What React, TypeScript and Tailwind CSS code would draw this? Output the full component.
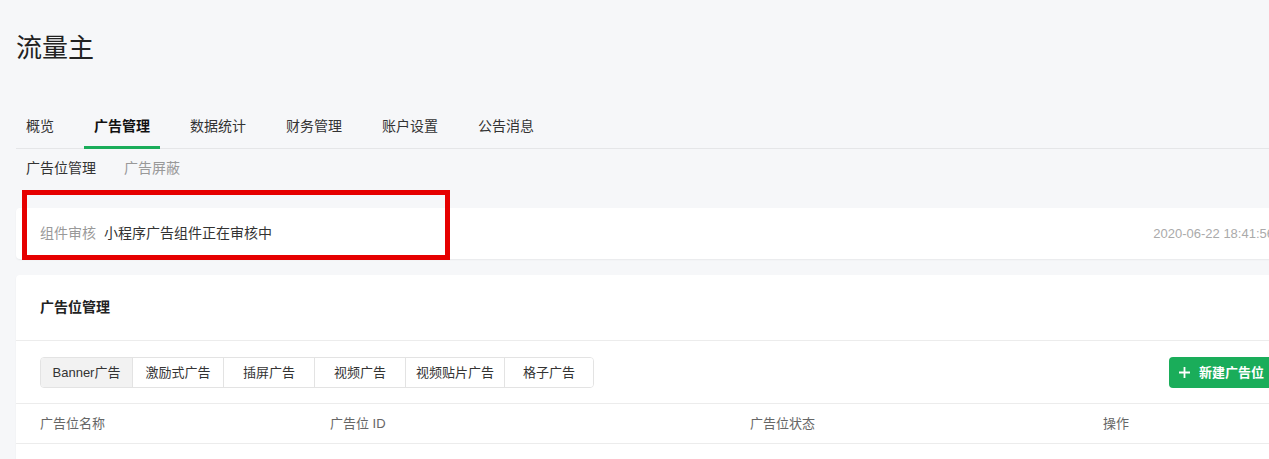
import React from "react";

const font = "font-['Liberation_Sans','Noto_Sans_CJK_SC',sans-serif]";

const tabs = ["概览", "广告管理", "数据统计", "财务管理", "账户设置", "公告消息"];
const adTypes = [
  { label: "Banner广告", w: "w-[91px]" },
  { label: "激励式广告", w: "w-[91px]" },
  { label: "插屏广告", w: "w-[91px]" },
  { label: "视频广告", w: "w-[91px]" },
  { label: "视频贴片广告", w: "w-[99px]" },
  { label: "格子广告", w: "w-[89px]" },
];

const App: React.FC = () => {
  return (
    <div className={`h-[459px] w-full overflow-hidden bg-[#f6f7f9] text-[#333] ${font}`}>
      <div className="ml-4 w-[1282px]">
        {/* Title */}
        <h1 className="pt-[30px] text-[26px] leading-[36px] text-[#222]">流量主</h1>

        {/* Main tabs */}
        <div className="mt-[50px] flex gap-5 border-b border-[#e5e6e8]">
          {tabs.map((t, i) => (
            <div
              key={t}
              className={`-mb-px px-[10px] pb-[10px] text-[14px] leading-[20px] border-b-[3px] ${
                i === 1 ? "border-[#1aad5a] font-bold text-[#111]" : "border-transparent text-[#333]"
              }`}
            >
              {t}
            </div>
          ))}
        </div>

        {/* Sub tabs */}
        <div className="mt-[9px] flex gap-7 pl-[10px] text-[14px] leading-[20px]">
          <span className="text-[#333]">广告位管理</span>
          <span className="text-[#999]">广告屏蔽</span>
        </div>

        {/* Notice card */}
        <div className="relative mt-[30px]">
          <div className="flex h-[51px] items-center justify-between rounded bg-white px-6 shadow-[0_1px_2px_rgba(0,0,0,0.06)]">
            <div className="flex gap-2 text-[14px]">
              <span className="text-[#999]">组件审核</span>
              <span className="text-[#333]">小程序广告组件正在审核中</span>
            </div>
            <span className="text-[13px] text-[#aaa]">2020-06-22 18:41:56</span>
          </div>
          <div className="pointer-events-none absolute left-[6px] top-[-18px] h-[70px] w-[428px] border-[5px] border-[#e60000]" />
        </div>

        {/* Ad slot card */}
        <div className="mt-4 h-[300px] rounded bg-white shadow-[0_1px_2px_rgba(0,0,0,0.06)]">
          <div className="flex h-[66px] items-center border-b border-[#ececec] px-6">
            <span className="text-[14px] font-bold text-[#222]">广告位管理</span>
          </div>

          <div className="flex items-center justify-between border-b border-[#ececec] px-6 pb-[15px] pt-[16px]">
            <div className="flex h-[31px] overflow-hidden rounded border border-[#e3e3e3]">
              {adTypes.map((a, i) => (
                <div
                  key={a.label}
                  className={`flex ${a.w} items-center justify-center text-[13px] text-[#333] ${
                    i > 0 ? "border-l border-[#e3e3e3]" : ""
                  } ${i === 0 ? "bg-[#f2f2f2]" : "bg-white"}`}
                >
                  {a.label}
                </div>
              ))}
            </div>
            <button className="flex h-[31px] items-center gap-[9px] rounded bg-[#1aad5a] px-[10px] text-[13px] font-bold text-white">
              <svg width="11" height="11" viewBox="0 0 11 11" fill="none" stroke="white" strokeWidth="1.8">
                <path d="M5.5 0v11M0 5.5h11" />
              </svg>
              新建广告位
            </button>
          </div>

          <div className="grid h-[40px] grid-cols-[290px_420px_353px_1fr] items-center border-b border-[#ececec] px-6 text-[13px] text-[#666]">
            <span>广告位名称</span>
            <span>广告位 ID</span>
            <span>广告位状态</span>
            <span>操作</span>
          </div>
        </div>
      </div>
    </div>
  );
};

export default App;
